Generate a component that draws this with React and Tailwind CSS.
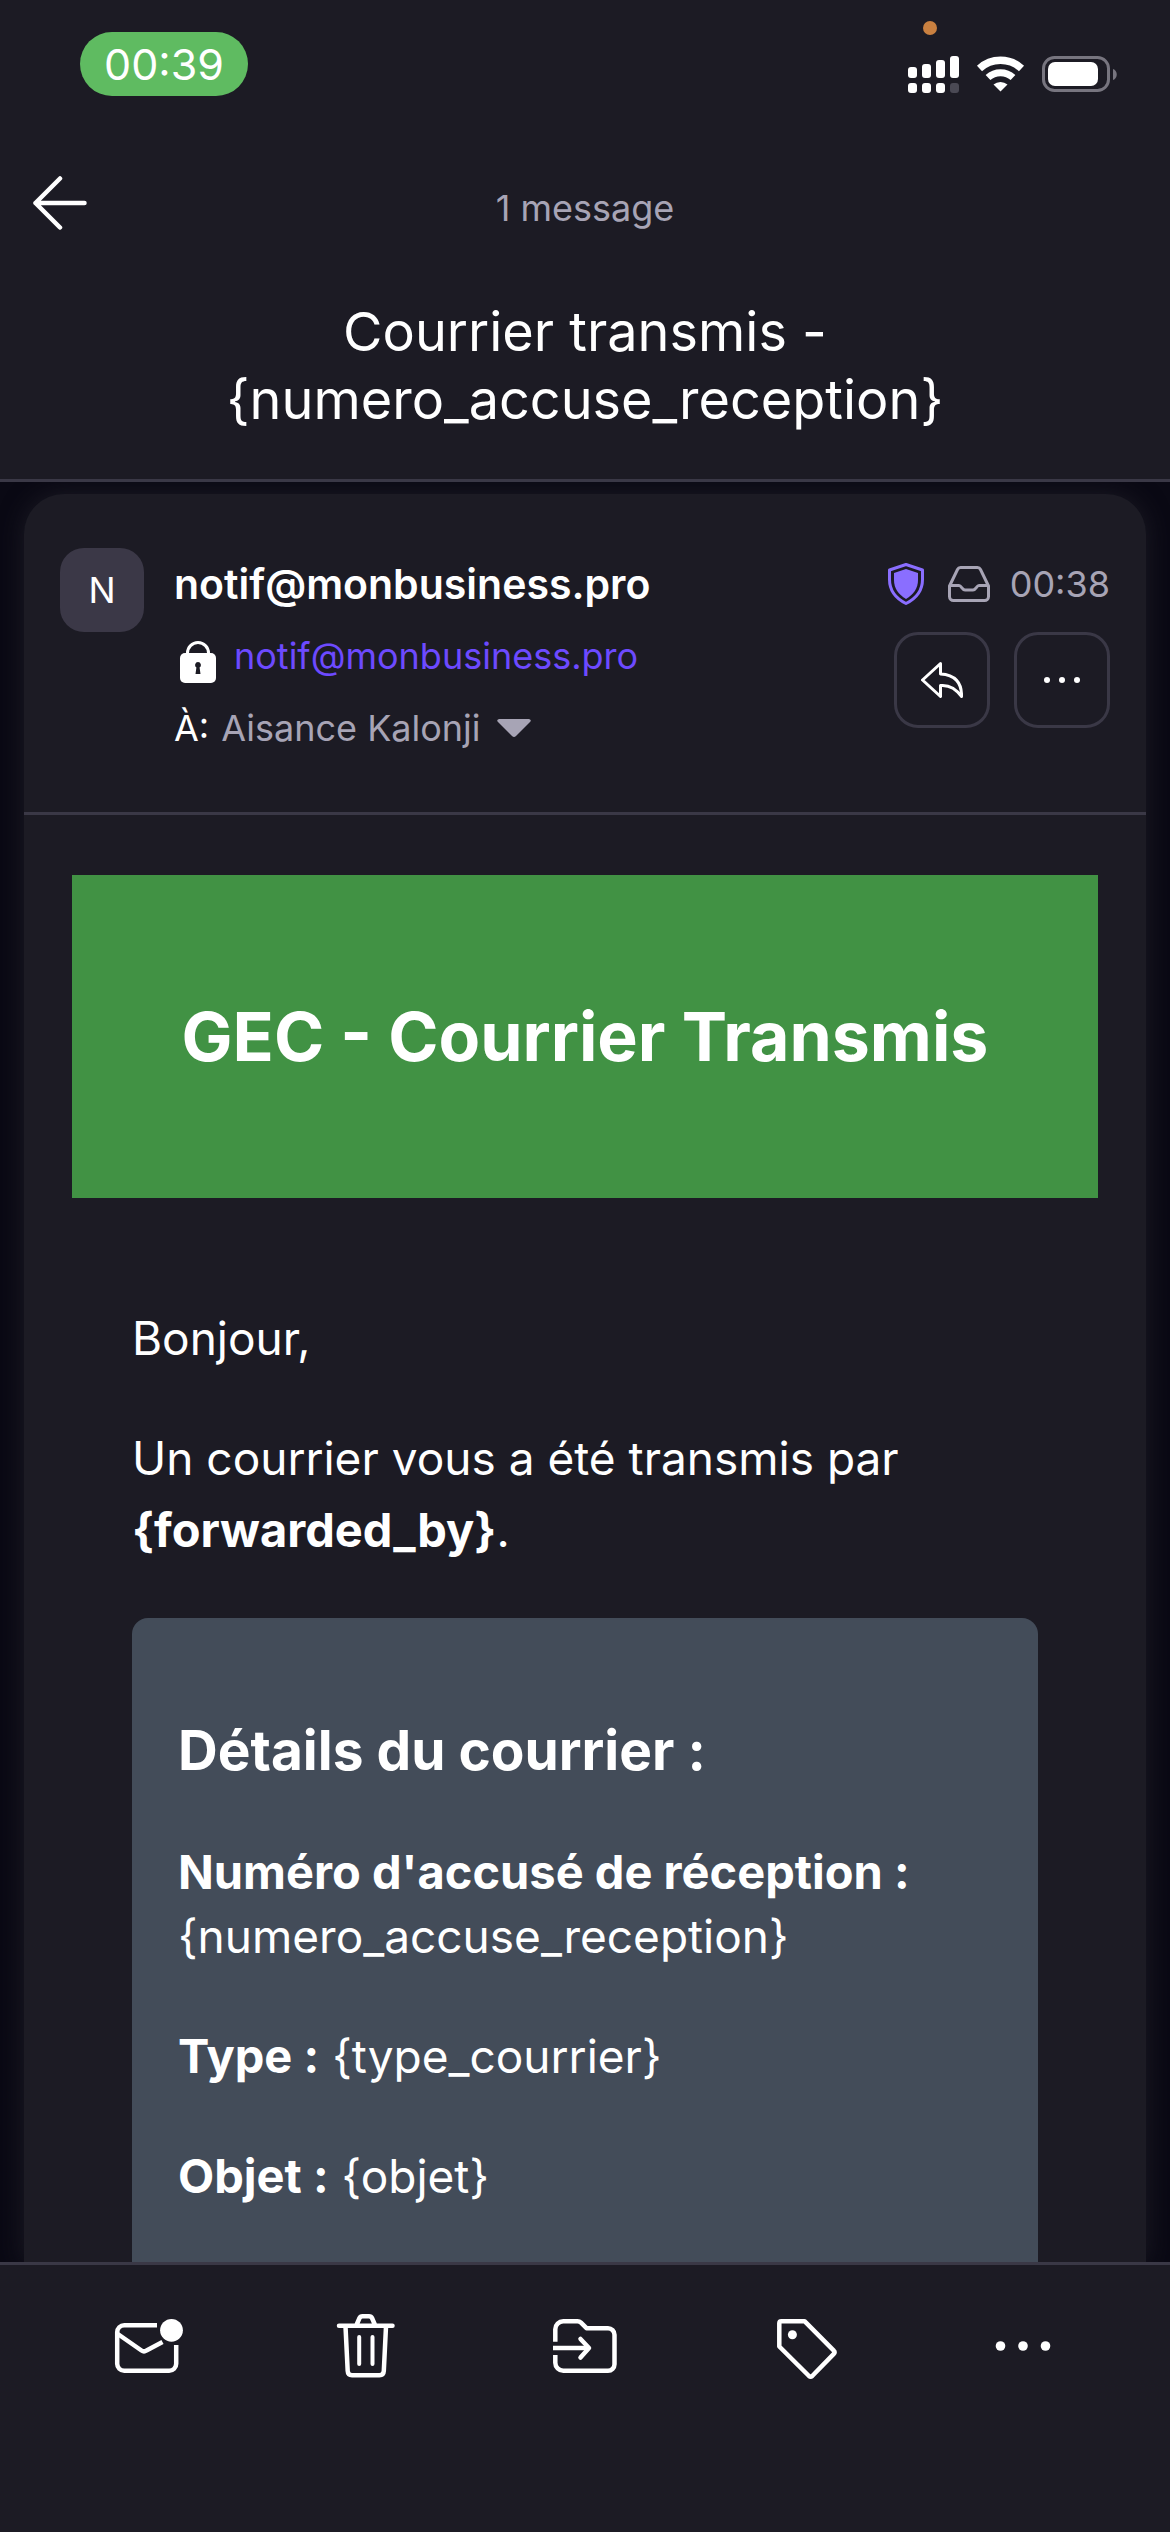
function SignalIcon() {
  return (
    <svg viewBox="0 0 52 38" className="h-[38px] w-[52px]" fill="white" aria-hidden="true">
      <rect x="0" y="11" width="9" height="11" rx="3" />
      <rect x="14" y="8" width="9" height="14" rx="3" />
      <rect x="28" y="4" width="9" height="18" rx="3" />
      <rect x="42" y="0" width="9" height="22" rx="3" />
      <rect x="0" y="27" width="9" height="10" rx="3" />
      <rect x="14" y="27" width="9" height="10" rx="3" />
      <rect x="28" y="27" width="9" height="10" rx="3" />
      <rect x="42" y="27" width="9" height="10" rx="3" fill="#4a4954" />
    </svg>
  );
}

function WifiIcon() {
  return (
    <svg viewBox="0 0 50 38" className="h-[38px] w-[50px]" fill="none" stroke="white" aria-hidden="true">
      <path d="M3.5 12.5a31 31 0 0 1 42 0" strokeWidth="7.5" />
      <path d="M12 21.5a18.5 18.5 0 0 1 25 0" strokeWidth="7" />
      <path d="M17.5 28.5a11 11 0 0 1 14 0L24.5 35.6Z" fill="white" stroke="none" />
    </svg>
  );
}

function BatteryIcon() {
  return (
    <svg viewBox="0 0 76 38" className="h-[38px] w-[76px]" aria-hidden="true">
      <rect x="1.5" y="1.5" width="65" height="33" rx="11" fill="none" stroke="#77757f" strokeWidth="3" />
      <rect x="6" y="6" width="50" height="24" rx="7" fill="white" />
      <path d="M71 13c5 1.500 5 9.500 0 11Z" fill="#77757f" />
    </svg>
  );
}

function ArrowLeftIcon() {
  return (
    <svg viewBox="0 0 54 54" className="h-[54px] w-[54px]" fill="none" stroke="white" strokeWidth="4.5" strokeLinecap="round" strokeLinejoin="round" aria-hidden="true">
      <path d="M27 2.500 2.500 27 27 51.500M2.500 27h49" />
    </svg>
  );
}

function LockIcon() {
  return (
    <svg viewBox="0 0 36 42" className="h-[42px] w-9" aria-hidden="true">
      <path d="M7.500 14v-2a10.500 10.500 0 0 1 21 0v2" fill="none" stroke="white" strokeWidth="3" />
      <rect y="12" width="36" height="30" rx="5" fill="white" />
      <path d="M18 21a3 3 0 0 1 1.600 5.500L20.500 33h-5l.9-6.500A3 3 0 0 1 18 21Z" fill="#1c1b24" />
    </svg>
  );
}

function ShieldIcon() {
  return (
    <svg viewBox="0 0 36 42" className="h-[42px] w-9" fill="#8a6eff" aria-hidden="true">
      <path d="M18 1.500 34.500 7v9.500c0 11-6.500 19-16.500 24C8 35.500 1.500 27.500 1.500 16.500V7Z" fill="none" stroke="#8a6eff" strokeWidth="3" strokeLinejoin="round" />
      <path d="M18 6 30 10v7c0 8.500-4.500 14.500-12 19C10.500 31.500 6 25.500 6 17v-7Z" />
    </svg>
  );
}

function InboxIcon() {
  return (
    <svg viewBox="0 0 42 36" className="h-9 w-[42px]" fill="none" stroke="#a7a4b5" strokeWidth="3" strokeLinejoin="round" aria-hidden="true">
      <path d="M1.500 20 9.500 3.500Q10.500 1.500 12.500 1.500h17Q31.500 1.500 32.500 3.500L40.500 20v10.500a4 4 0 0 1-4 4h-31a4 4 0 0 1-4-4Z" />
      <path d="M1.500 19.500H11c2.500 0 3 4.500 6 4.500h8c3 0 3.500-4.500 6-4.500h9.500" />
    </svg>
  );
}

function ReplyIcon() {
  return (
    <svg viewBox="0 0 42 36" className="h-9 w-[42px]" fill="none" stroke="white" strokeWidth="3" strokeLinejoin="round" aria-hidden="true">
      <path d="M19.500 1.500 1.500 18l18 16.500V23.500c10-1 16 4 21 11C41 21 34 12.500 19.500 12Z" />
    </svg>
  );
}

function SmallDotsIcon() {
  return (
    <svg viewBox="0 0 36 6" className="h-1.5 w-9" fill="white" aria-hidden="true">
      <circle cx="3" cy="3" r="3" />
      <circle cx="18" cy="3" r="3" />
      <circle cx="33" cy="3" r="3" />
    </svg>
  );
}

function UnreadIcon() {
  return (
    <svg viewBox="0 0 72 72" className="h-[72px] w-[72px]" fill="none" stroke="white" strokeWidth="4.5" strokeLinejoin="round" aria-hidden="true">
      <path d="M46 17.2H13.200a7 7 0 0 0-7 7v31.600a7 7 0 0 0 7 7h45a7 7 0 0 0 7-7V37" />
      <path d="M6.800 26 30.500 42.500q2.500 1.800 5 0L51.500 34" />
      <circle cx="60.500" cy="22.300" r="11.400" fill="white" stroke="none" />
    </svg>
  );
}

function TrashIcon() {
  return (
    <svg viewBox="0 0 72 72" className="h-[72px] w-[72px]" fill="none" stroke="white" strokeWidth="4.5" strokeLinecap="round" strokeLinejoin="round" aria-hidden="true">
      <path d="M9 17.700h53.500M26.500 17l3-7q.8-1.800 3-1.800h6.500q2.200 0 3 1.800l3 7M15.500 18.500l2.200 44.500q.2 4.300 4.300 4.300h27.500q4.100 0 4.300-4.300L56 18.500" />
      <path d="M29.200 29v27M42.500 29v27" strokeWidth="4" />
    </svg>
  );
}

function MoveIcon() {
  return (
    <svg viewBox="0 0 72 72" className="h-[72px] w-[72px]" fill="none" stroke="white" strokeWidth="4.5" strokeLinejoin="round" aria-hidden="true">
      <path d="M6.300 33.700V21.200a8 8 0 0 1 8-8H28.500q2 0 3.500 1.500l5.500 5.500h21.500a6.500 6.500 0 0 1 6.500 6.500v29.600a6.500 6.500 0 0 1-6.500 6.500H14.300a8 8 0 0 1-8-8V47" />
      <path d="M4 40h35" />
      <path d="M31.500 31 40 40 31.500 49.500" strokeLinecap="round" />
    </svg>
  );
}

function TagIcon() {
  return (
    <svg viewBox="0 0 72 72" className="h-[72px] w-[72px]" fill="none" stroke="white" strokeWidth="4.5" strokeLinejoin="round" aria-hidden="true">
      <path d="M13.300 13.200H36.500L65.800 42.700q1.700 1.600 0 3.200L44.200 68q-1.600 1.500-3.200 0L11.300 38.500V15.200q0-2 2-2Z" />
      <circle cx="24.400" cy="26.700" r="4.500" fill="white" stroke="none" />
    </svg>
  );
}

function MoreIcon() {
  return (
    <svg viewBox="0 0 72 72" className="h-[72px] w-[72px]" fill="white" aria-hidden="true">
      <circle cx="13.500" cy="38" r="4.800" />
      <circle cx="36" cy="38" r="4.800" />
      <circle cx="58.500" cy="38" r="4.800" />
    </svg>
  );
}

const toolbar = [
  { label: "Marquer comme non lu", Icon: UnreadIcon },
  { label: "Supprimer", Icon: TrashIcon },
  { label: "Déplacer", Icon: MoveIcon },
  { label: "Étiqueter", Icon: TagIcon },
  { label: "Plus", Icon: MoreIcon },
];

const iconButton = "flex h-24 w-24 items-center justify-center rounded-3xl border-3 border-[#3a3846]";

function Strong({ children }) {
  return <strong className="text-[47px] font-bold">{children}</strong>;
}

export default function App() {
  return (
    <div className="flex h-screen flex-col overflow-hidden bg-[#1c1b24] font-['Inter',sans-serif] text-white">
      <header className="shrink-0 border-b-3 border-[#3a3846] pb-[45px]">
        <div className="flex items-start justify-between pr-[52px] pl-20">
          <div className="mt-8 flex h-16 items-center rounded-full bg-[#5fbb61] px-6 text-[43px] leading-none">00:39</div>
          <div className="relative mt-14 flex gap-4">
            <span className="absolute -top-[35px] left-[15px] h-3.5 w-3.5 rounded-full bg-[#c98040]" />
            <SignalIcon />
            <WifiIcon />
            <BatteryIcon />
          </div>
        </div>

        <div className="mt-20 grid h-[54px] grid-cols-[1fr_auto_1fr] items-center px-[33px]">
          <button aria-label="Retour" className="justify-self-start">
            <ArrowLeftIcon />
          </button>
          <span className="pt-2.5 text-[36px] leading-none text-[#a7a4b5]">1 message</span>
        </div>

        <h1 className="mt-[68px] text-center text-[54px] leading-[68px]">
          Courrier transmis -<br />
          {"{numero_accuse_reception}"}
        </h1>
      </header>

      <main className="min-h-0 flex-1 overflow-hidden bg-[#0a0914] px-6 pt-3">
        <article className="h-full rounded-t-[40px] bg-[#1c1b24] shadow-[0_0_24px_#1c1b24]">
          <div className="flex items-start border-b-3 border-[#3a3846] px-9 pt-[54px] pb-12">
            <div className="flex h-21 w-21 shrink-0 items-center justify-center rounded-3xl bg-[#3b3847] text-[36px]">N</div>
            <div className="ml-[30px] min-w-0 flex-1">
              <h2 className="text-[41px] leading-[72px] font-semibold">notif@monbusiness.pro</h2>
              <div className="flex items-center gap-[18px] pl-1.5 text-[36px] leading-[72px]">
                <span className="pt-3">
                  <LockIcon />
                </span>
                <a href="mailto:notif@monbusiness.pro" className="text-[#6d4aff]">notif@monbusiness.pro</a>
              </div>
              <button className="flex items-center text-[36px] leading-[72px]">
                <span>À:</span>
                <span className="ml-3 text-[#a7a4b5]">Aisance Kalonji</span>
                <svg viewBox="0 0 34 18" className="ml-4 h-[18px] w-[34px]" fill="#a7a4b5" aria-hidden="true">
                  <path d="M2 0h30q3 1 1 3L19 17q-2 2-4 0L1 3Q-1 1 2 0Z" />
                </svg>
              </button>
            </div>
            <div className="flex flex-col items-end gap-3">
              <div className="flex h-[72px] items-center gap-5">
                <span className="pr-1">
                  <ShieldIcon />
                </span>
                <InboxIcon />
                <time className="text-[36px] leading-none text-[#a7a4b5]">00:38</time>
              </div>
              <div className="flex gap-6">
                <button aria-label="Répondre" className={iconButton}>
                  <ReplyIcon />
                </button>
                <button aria-label="Plus d'actions" className={iconButton}>
                  <SmallDotsIcon />
                </button>
              </div>
            </div>
          </div>

          <div className="px-12 pt-[60px]">
            <h2 className="bg-[#419244] px-6 py-[108px] text-center text-[68px] leading-[107px] font-bold">GEC - Courrier Transmis</h2>
            <div className="px-15 pt-[104px] text-[46px] leading-[72px]">
              <p>Bonjour,</p>
              <p className="mt-12">
                Un courrier vous a été transmis par <br />
                <Strong>{"{forwarded_by}"}</Strong>.
              </p>
              <section className="mt-[52px] rounded-2xl bg-[#434c59] px-[46px] pt-[94px] leading-[64px]">
                <h3 className="text-[55px] leading-[76px] font-bold">Détails du courrier :</h3>
                <p className="mt-[52px]">
                  <Strong>Numéro d'accusé de réception :</Strong>
                  <br />
                  {"{numero_accuse_reception}"}
                </p>
                <p className="mt-14">
                  <Strong>Type :</Strong> {"{type_courrier}"}
                </p>
                <p className="mt-14 pb-24">
                  <Strong>Objet :</Strong> {"{objet}"}
                </p>
              </section>
            </div>
          </div>
        </article>
      </main>

      <nav aria-label="Actions du message" className="z-10 grid h-[270px] shrink-0 grid-cols-5 items-start border-t-3 border-[#3a3846] bg-[#1c1b24] px-[38px] pt-[43px]">
        {toolbar.map(({ label, Icon }) => (
          <button key={label} aria-label={label} className="flex justify-center">
            <Icon />
          </button>
        ))}
      </nav>
    </div>
  );
}
